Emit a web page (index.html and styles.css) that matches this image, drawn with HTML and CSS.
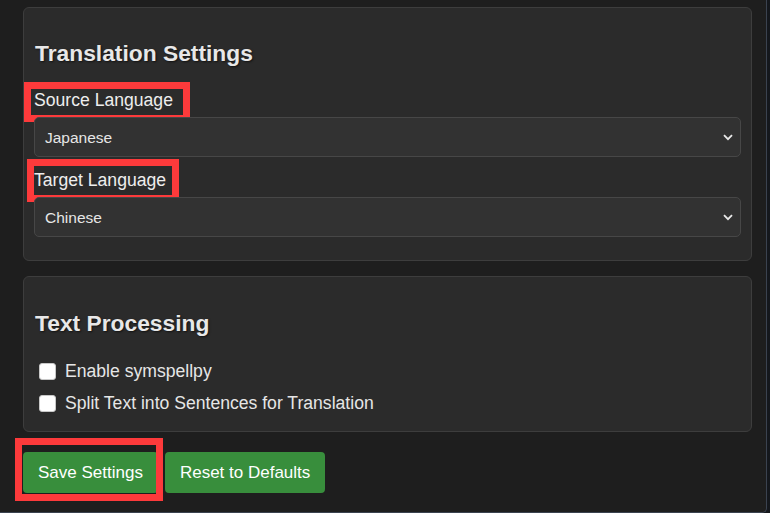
FILE: index.html
```html
<!DOCTYPE html>
<html lang="en">
  <head>
    <meta charset="UTF-8" />
    <title>Settings</title>
    <link rel="stylesheet" href="styles.css">
  </head>
  <body>
    <div class="frame">
      <section class="panel">
        <h2>Translation Settings</h2>
        <div class="field">
          <label class="field-label" for="source-lang">
            Source Language
            <span class="mark mark-source"></span>
          </label>
          <div class="select-wrap">
            <select id="source-lang">
              <option>Japanese</option>
              <option>English</option>
              <option>Chinese</option>
            </select>
            <svg class="chevron" width="10" height="7" viewBox="0 0 10 7">
              <path d="M1 1.2 L5 5.2 L9 1.2" fill="none" stroke="#e8e8e8" stroke-width="1.8" />
            </svg>
          </div>
        </div>
        <div class="field">
          <label class="field-label" for="target-lang">
            Target Language
            <span class="mark mark-target"></span>
          </label>
          <div class="select-wrap">
            <select id="target-lang">
              <option>Chinese</option>
              <option>English</option>
              <option>Japanese</option>
            </select>
            <svg class="chevron" width="10" height="7" viewBox="0 0 10 7">
              <path d="M1 1.2 L5 5.2 L9 1.2" fill="none" stroke="#e8e8e8" stroke-width="1.8" />
            </svg>
          </div>
        </div>
      </section>

      <section class="panel panel-text">
        <h2>Text Processing</h2>
        <div class="checks">
          <label class="check-row">
            <input type="checkbox" />
            Enable symspellpy
          </label>
          <label class="check-row">
            <input type="checkbox" />
            Split Text into Sentences for Translation
          </label>
        </div>
      </section>

      <div class="actions">
        <button class="btn">
          Save Settings
          <span class="mark mark-save"></span>
        </button>
        <button class="btn">Reset to Defaults</button>
      </div>
    </div>
  </body>
</html>
```

FILE: styles.css
```css
html, body {
  margin: 0;
  padding: 0;
}

body {
  background-color: #15181d;
  font-family: "Liberation Sans", Arial, sans-serif;
  color: #e6e6e6;
}

.frame {
  box-sizing: border-box;
  width: 767px;
  height: 513px;
  background-color: #1e1e1e;
  border-right: 1px solid #3b4350;
  border-bottom: 1px solid #3b4350;
  border-bottom-right-radius: 5px;
  padding: 7px 14px 0 23px;
  overflow: hidden;
}

.panel {
  background-color: #2b2b2b;
  border: 1px solid #3d3d3d;
  border-radius: 6px;
  padding: 10px 10px 23px;
  margin-bottom: 15px;
}

.panel h2 {
  margin: 22px 0 24px 1px;
  font-size: 22.8px;
  line-height: 26px;
  font-weight: bold;
  color: #e8e8e8;
  text-shadow: 1px 1px 2px rgba(0, 0, 0, 0.6);
}

.field + .field {
  margin-top: 13px;
}

.field-label {
  position: relative;
  display: inline-block;
  vertical-align: top;
  font-size: 17.6px;
  line-height: 20px;
  margin-bottom: 7px;
  color: #eeeeee;
}

.select-wrap {
  position: relative;
}

.select-wrap select {
  appearance: none;
  -webkit-appearance: none;
  display: block;
  box-sizing: border-box;
  width: 100%;
  height: 40px;
  padding: 0 10px;
  background-color: #323232;
  border: 1px solid #474747;
  border-radius: 5px;
  color: #e6e6e6;
  font-family: "Liberation Sans", Arial, sans-serif;
  font-size: 15.5px;
}

.chevron {
  position: absolute;
  right: 8px;
  top: 17px;
  pointer-events: none;
}

.panel-text {
  padding-bottom: 12px;
}

.panel-text h2 {
  margin-top: 23px;
  margin-bottom: 19px;
}

.check-row {
  display: flex;
  align-items: center;
  height: 32px;
  font-size: 17.6px;
  color: #e6e6e6;
}

.check-row input {
  appearance: none;
  -webkit-appearance: none;
  box-sizing: border-box;
  width: 17px;
  height: 17px;
  margin: 0 9px 0 5px;
  background-color: #ffffff;
  border: 1px solid #c8c8c8;
  border-radius: 3px;
}

.actions {
  display: flex;
  gap: 7px;
  margin-top: 20px;
}

.btn {
  position: relative;
  height: 41px;
  padding: 0 15px;
  background-color: #388e3c;
  color: #ffffff;
  border: none;
  border-radius: 4px;
  font-family: "Liberation Sans", Arial, sans-serif;
  font-size: 17px;
  cursor: pointer;
}

/* red annotation boxes */
.mark {
  position: absolute;
  box-sizing: border-box;
  border: 7px solid #fd3a3b;
  pointer-events: none;
}

.mark-source {
  left: -10px;
  top: -8px;
  width: 166px;
  height: 40px;
}

.mark-target {
  left: -7px;
  top: -11px;
  width: 152px;
  height: 43px;
}

.mark-save {
  left: -8px;
  top: -14px;
  width: 148px;
  height: 63px;
}
```
